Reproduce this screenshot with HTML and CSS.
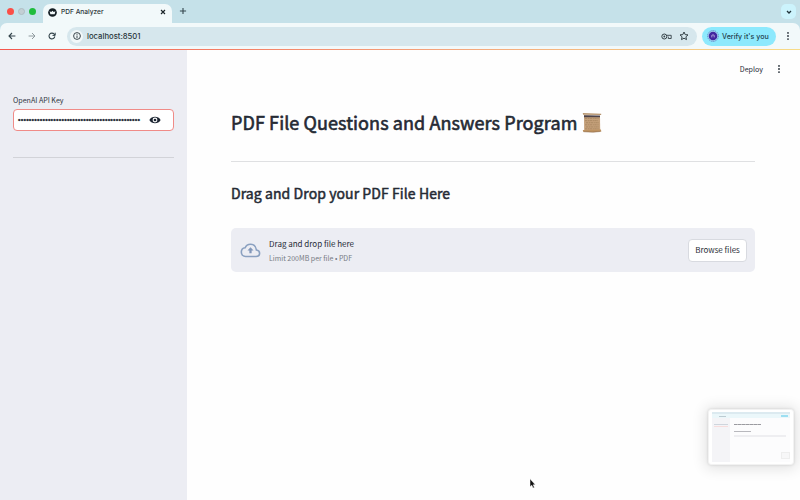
FILE: index.html
```html
<!DOCTYPE html>
<html lang="en">
<head>
<meta charset="utf-8">
<title>PDF Analyzer</title>
<link rel="stylesheet" href="styles.css">
</head>
<body>
<header class="browser">
  <div class="tabstrip">
    <div class="lights"><i class="light red"></i><i class="light gray"></i><i class="light green"></i></div>
    <div class="tab">
      <svg class="favicon" viewBox="0 0 10 10"><circle cx="5" cy="5" r="4.8" fill="#141e24"/><path d="M1.8 3.7L3.6 4.5 5 3l1.4 1.5 1.8-.8-.8 3.2H2.6z" fill="#f3fafb"/></svg>
      <span class="tab-title">PDF Analyzer</span>
      <svg class="close" viewBox="0 0 6 6"><path d="M1 1l4 4M5 1L1 5" stroke="#1b2529" stroke-width="1.15"/></svg>
    </div>
    <svg class="plus" viewBox="0 0 8 8"><path d="M4 .9v6.2M.9 4h6.2" stroke="#35484f" stroke-width="1.1"/></svg>
    <div class="tab-search"><svg viewBox="0 0 6 6"><path d="M1 2l2 2 2-2" fill="none" stroke="#20343b" stroke-width="1.3"/></svg></div>
  </div>
  <div class="toolbar">
    <svg class="nav" viewBox="0 0 8 8"><path d="M7.4 4H1M4 1L1 4l3 3" fill="none" stroke="#34454c" stroke-width="1.1"/></svg>
    <svg class="nav" viewBox="0 0 8 8"><path d="M.6 4H7M4 1l3 3-3 3" fill="none" stroke="#8f9a9e" stroke-width="1"/></svg>
    <svg class="nav" viewBox="0 0 8 8"><path d="M6.8 4.4A2.9 2.9 0 1 1 6.2 2.2L7 3" fill="none" stroke="#34454c" stroke-width="1.1"/><path d="M7.2.7v2.7H4.5" fill="none" stroke="#34454c" stroke-width="1"/></svg>
    <div class="address">
      <span class="info"><svg viewBox="0 0 8 8"><circle cx="4" cy="4" r="3.4" fill="none" stroke="#29363b" stroke-width=".9"/><path d="M4 3.5V6M4 1.9v.9" stroke="#29363b" stroke-width=".9"/></svg></span>
      <span class="url">localhost:8501</span>
      <svg class="key" viewBox="0 0 11 7"><circle cx="3.3" cy="3.5" r="2.5" fill="none" stroke="#344147"/><circle cx="3.3" cy="3.5" r=".9" fill="#344147"/><path d="M5.6 2.3h4.6v3.2H7.3V3.6" fill="none" stroke="#344147" stroke-width=".9"/></svg>
      <svg class="star" viewBox="0 0 10 10"><path d="M5 1l1.2 2.6 2.8.3-2.1 1.9.6 2.8L5 7.2 2.5 8.6l.6-2.8L1 3.9l2.8-.3z" fill="none" stroke="#344147"/></svg>
    </div>
    <div class="profile">
      <svg viewBox="0 0 12 12"><circle cx="6" cy="6" r="5.4" fill="#a4d9f4" stroke="#5368b8" stroke-width=".7" stroke-dasharray="1.5 .7"/><circle cx="6" cy="6" r="4.3" fill="#4327a0"/><path d="M4.8 7.4V5.3q1.2-1 2.4 0v2.1" fill="none" stroke="#c9bee8" stroke-width=".8"/></svg>
      <span>Verify it's you</span>
    </div>
    <svg class="kebab browser-kebab" viewBox="0 0 4 10"><circle cx="2" cy="1.9" r=".9"/><circle cx="2" cy="5" r=".9"/><circle cx="2" cy="8.1" r=".9"/></svg>
  </div>
  <div class="progress"></div>
</header>
<div class="app">
  <aside class="sidebar">
    <div class="label">OpenAI API Key</div>
    <div class="password">
      <span class="dots">•••••••••••••••••••••••••••••••••••••••••••••</span>
      <svg viewBox="0 0 12 8"><path d="M.4 4C2.4-.3 9.6-.3 11.6 4 9.6 8.3 2.4 8.3.4 4z" fill="#1d2633"/><circle cx="6" cy="4" r="2.4" fill="#fff"/><circle cx="6" cy="4" r="1.35" fill="#1d2633"/></svg>
    </div>
    <hr class="side-rule">
  </aside>
  <main class="main">
    <div class="actions"><span>Deploy</span><svg class="kebab" viewBox="0 0 4 10"><circle cx="2" cy="1.9" r=".95"/><circle cx="2" cy="5" r=".95"/><circle cx="2" cy="8.1" r=".95"/></svg></div>
    <section class="content">
      <h1><span class="h1-text">PDF File Questions and Answers Program</span>
        <svg class="scroll" viewBox="0 0 20 21"><path d="M2 3.5l16 .8.2 14-16 .5z" fill="#c4a07a"/><path d="M3 6.5h14M3 8.6h13M4 10.7h13M3 12.8h14M4 14.9h13M3 16.8h14" stroke="#a3825b" stroke-width=".7" stroke-dasharray="2.3 .7 1.2 .5"/><path d="M2 4.2l16 .2" stroke="#4d4248" stroke-width="1.9"/><path d="M.8 1l18.4.7v1.4L1 2.7z" fill="#b89670"/><path d="M.8 18l18.1-.4.5 1.8-8 .9-10.2-.5z" fill="#bd9260"/><path d="M1.5 19.7l9 .4 8-.6" fill="none" stroke="#8b684a" stroke-width=".6"/></svg>
      </h1>
      <hr class="rule">
      <h2><span class="h2-text">Drag and Drop your PDF File Here</span></h2>
      <div class="dropzone">
        <svg class="cloud" viewBox="0 0 22 16"><path d="M5.7 14.4h11.2c2.2 0 3.8-1.5 3.8-3.5 0-1.9-1.4-3.3-3.4-3.5C16.8 3.7 14.4 1.3 11 1.3c-2.6 0-4.8 1.5-5.7 3.7C2.9 5.3 1.2 7.2 1.2 9.7c0 2.7 2 4.7 4.5 4.7z" fill="none" stroke="#8aa0c0" stroke-width="1.7"/><path d="M11 4.4l3.2 3.5h-2v3H9.8v-3h-2z" fill="#8297b9"/></svg>
        <div class="drop-copy"><div class="drop-title">Drag and drop file here</div><div class="drop-limit">Limit 200MB per file • PDF</div></div>
        <button class="browse">Browse files</button>
      </div>
    </section>
  </main>
</div>
<div class="preview">
  <div class="mini-bar"></div>
  <div class="mini-tools"><i></i><b></b></div>
  <div class="mini-body">
    <div class="mini-side"><i></i></div>
    <div class="mini-main"><i class="mini-h1"></i><i class="mini-h2"></i><i class="mini-drop"></i><i class="mini-thumb"></i></div>
  </div>
</div>
<svg class="cursor" viewBox="0 0 7 11"><path d="M1 .8v8l1.8-1.6 1.2 2.9 1.4-.6-1.2-2.7h2.1z" fill="#111" stroke="#fff" stroke-width=".5"/></svg>
</body>
</html>
```
FILE: styles.css
```css
* { box-sizing: border-box; }
body { margin: 0; width: 800px; height: 500px; overflow: hidden; background: #fefefe; color: #262a35; font-family: "Noto Sans CJK JP", "Noto Sans", sans-serif; }
svg { display: block; flex: none; }
hr { margin: 0; border: 0; }
.browser { height: 50px; font-family: Inter, sans-serif; background: #c5e1e9; }
.progress { height: 1px; background: linear-gradient(90deg, #f4584e, #f4a47c 55%, #f7dc87); }
.tabstrip { height: 23px; display: flex; }
.lights { display: flex; gap: 4px; padding: 8px 0 0 7px; width: 43px; }
.light { width: 7px; height: 7px; border-radius: 50%; }
.red { background: #fb4f47; }
.gray { background: #c3cfd4; border: 1px solid #aebdc3; }
.green { background: #20bd3d; }
.tab { width: 129px; height: 20px; margin-top: 4px; padding: 0 6px 4px 5px; display: flex; align-items: center; background: #f2f9fa; border-radius: 7px 7px 0 0; }
.favicon { width: 9px; height: 9px; }
.tab-title { margin-left: 4px; font-size: 6.6px; line-height: 10px; font-weight: 500; color: #293438; }
.close { width: 6px; height: 6px; margin-left: auto; }
.plus { width: 8px; height: 8px; margin: 7px 0 0 7px; }
.tab-search { width: 15px; height: 15px; margin: 4px 4px 0 auto; display: flex; align-items: center; justify-content: center; border-radius: 5px; background: #ccf3fc; }
.tab-search svg { width: 6px; height: 6px; }
.toolbar { height: 26px; display: flex; align-items: center; padding-left: 8px; background: #f2f9fa; border-radius: 7px 7px 0 0; }
.nav { width: 8px; height: 8px; margin-right: 12px; }
.address { width: 630px; height: 19px; margin-left: -1px; padding: 0 8px 0 3px; display: flex; align-items: center; background: #d6e7ed; border-radius: 10px; }
.info { width: 13px; height: 13px; display: flex; align-items: center; justify-content: center; border-radius: 50%; background: #f2f8f9; }
.info svg { width: 8px; height: 8px; }
.url { margin-left: 4px; font-size: 7.7px; line-height: 13px; font-weight: 500; color: #28363b; }
.key { width: 11px; height: 7px; margin-left: auto; }
.star { width: 10px; height: 10px; margin-left: 7px; }
.profile { width: 74px; height: 19px; margin-left: 5px; padding-left: 5px; display: flex; align-items: center; gap: 3px; border-radius: 10px; background: #8de9fd; font-size: 7.1px; line-height: 13px; font-weight: 500; color: #23424f; white-space: nowrap; }
.profile svg { width: 12px; height: 12px; }
.kebab { width: 4px; height: 10px; fill: #29313a; }
.browser-kebab { margin-left: 10px; }
.app { display: flex; height: 450px; }
.sidebar { width: 187px; padding: 44px 13px 0 13px; background: #ecedf3; }
.label { height: 15px; font-size: 7.1px; line-height: 13px; color: #303541; }
.password { height: 22px; display: flex; align-items: center; justify-content: space-between; padding: 0 12px 0 4px; border: 1px solid #f08b87; border-radius: 4px; background: #fff; }
.dots { font-family: "Liberation Sans", sans-serif; font-size: 7.2px; line-height: 10px; color: #252a34; letter-spacing: .2px; white-space: nowrap; -webkit-text-stroke: .3px #252a34; }
.password svg { width: 12px; height: 8px; }
.side-rule { height: 1px; margin-top: 26px; background: #d2d3d8; }
.main { flex: 1; }
.actions { height: 38px; padding: 0 19px 0 0; display: flex; align-items: center; justify-content: flex-end; gap: 14px; font-size: 7.1px; line-height: 12px; }
.content { width: 524px; margin-left: 44px; }
h1, h2 { margin: 0; color: #252a34; white-space: nowrap; font-weight: 400; }
h1 { height: 73px; padding-top: 20px; display: flex; gap: 5px; font-size: 18px; line-height: 28px; letter-spacing: .09px; -webkit-text-stroke: .6px #252a34; }
.scroll { width: 20px; height: 21px; margin-top: 4px; -webkit-text-stroke: 0; }
.rule { height: 1px; background: #dfe0e2; }
h2 { height: 66px; padding-top: 20px; font-size: 14px; line-height: 22px; letter-spacing: .08px; -webkit-text-stroke: .5px #252a34; }
.dropzone { height: 44px; padding: 0 8px 0 9px; display: flex; align-items: center; border-radius: 5px; background: #ecedf3; }
.cloud { width: 21px; height: 15px; }
.drop-copy { margin-left: 8px; font-size: 8px; line-height: 14px; padding-top: 1px; }
.drop-limit { font-size: 7px; color: #777a83; }
.browse { width: 59px; height: 23px; margin-left: auto; padding: 0; border: 1px solid #d8dae0; border-radius: 4px; background: #fff; color: #2b2f38; font: 8px/12px "Noto Sans CJK JP", sans-serif; white-space: nowrap; }
.preview { position: absolute; left: 708px; top: 409px; width: 86px; height: 56px; padding: 2px 3px; background: #fff; border: 1px solid #f2f2f2; border-radius: 3px; box-shadow: 0 1px 14px 3px #0000001c, 0 0 3px #0002; }
.mini-bar { height: 2px; background: #dceaf0; }
.mini-tools { height: 4px; background: #ebf7fa; display: flex; align-items: center; justify-content: space-between; padding: 0 2px 0 7px; }
.mini-tools i { width: 7px; height: 1px; background: #bccbd2; }
.mini-tools b { width: 7px; height: 2px; background: #9ddff2; }
.mini-body { display: flex; height: 44px; }
.mini-side { width: 18px; padding: 6px 2px; background: #f4f4f7; }
.mini-side i { display: block; height: 3px; border-top: 1px solid #cfd5dd; border-bottom: 1px solid #f7dddd; }
.mini-main { flex: 1; padding: 6px 0 0 4px; background: #fcfcfd; }
.mini-main i { display: block; }
.mini-h1 { width: 27px; height: 1px; background: repeating-linear-gradient(90deg, #9a9aa0 0 3px, #bbb 3px 4px); }
.mini-h2 { width: 17px; height: 1px; margin-top: 6px; background: #b8b8bd; }
.mini-drop { width: 52px; height: 2px; margin-top: 3px; background: #eeeef1; }
.mini-main .mini-thumb { width: 9px; height: 7px; margin: 15px 0 0 47px; background: #f7f7f8; border: 1px solid #eee; }
.cursor { position: absolute; left: 529px; top: 478px; width: 7px; height: 11px; }
```
